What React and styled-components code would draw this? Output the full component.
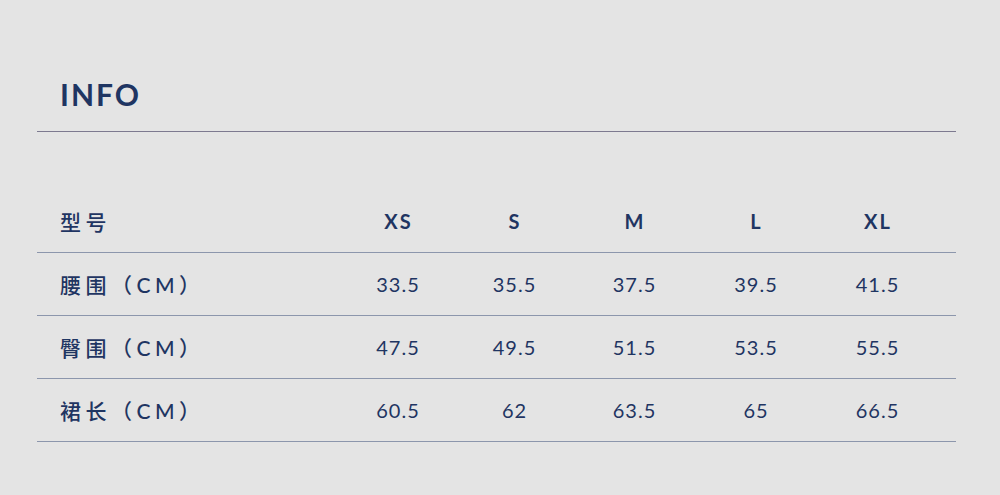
import React from "react";
import styled, { createGlobalStyle } from "styled-components";

const colors = {
  page: "#e4e4e4",
  ink: "#1f3562",
  rule: "#7d7a90",
  rowLine: "#8c96ac",
};

const GlobalStyle = createGlobalStyle`
  html, body {
    margin: 0;
    padding: 0;
    background: ${colors.page};
  }
  body {
    font-family: "Lato", "Noto Sans CJK SC", sans-serif;
    color: ${colors.ink};
  }
`;

const Page = styled.main`
  width: 1000px;
  height: 495px;
  box-sizing: border-box;
  padding: 0 44px 0 37px;
  background: ${colors.page};
`;

const Title = styled.h1`
  margin: 0;
  padding: 72px 0 15px 23px;
  font-size: 30px;
  line-height: 44px;
  font-weight: 700;
  letter-spacing: 2px;
  color: ${colors.ink};
  border-bottom: 1px solid ${colors.rule};
`;

const Table = styled.div`
  margin-top: 58px;
`;

const Row = styled.div`
  display: grid;
  grid-template-columns: 303px 115px 118px 122px 121px 122px 1fr;
  align-items: center;
  height: 62px;
  border-bottom: 1px solid ${colors.rowLine};
`;

const Label = styled.div`
  padding-left: 23px;
  font-family: "Lato", "Noto Sans CJK SC", sans-serif;
  font-size: 21px;
  font-weight: 500;
  letter-spacing: 4.5px;
  color: ${colors.ink};
`;

const Cell = styled.div`
  text-align: center;
  font-size: 20px;
  font-weight: ${(p) => (p.$head ? 700 : 400)};
  letter-spacing: ${(p) => (p.$head ? "2px" : "1px")};
  padding-left: ${(p) => (p.$head ? "2px" : "1px")};
  color: ${colors.ink};
`;

const sizes = ["XS", "S", "M", "L", "XL"];

const rows = [
  { label: "腰围（CM）", values: ["33.5", "35.5", "37.5", "39.5", "41.5"] },
  { label: "臀围（CM）", values: ["47.5", "49.5", "51.5", "53.5", "55.5"] },
  { label: "裙长（CM）", values: ["60.5", "62", "63.5", "65", "66.5"] },
];

function App() {
  return (
    <>
      <GlobalStyle />
      <Page>
        <Title>INFO</Title>
        <Table>
          <Row>
            <Label>型号</Label>
            {sizes.map((s) => (
              <Cell $head key={s}>
                {s}
              </Cell>
            ))}
          </Row>
          {rows.map((r) => (
            <Row key={r.label}>
              <Label>{r.label}</Label>
              {r.values.map((v, i) => (
                <Cell key={i}>{v}</Cell>
              ))}
            </Row>
          ))}
        </Table>
      </Page>
    </>
  );
}

export default App;
